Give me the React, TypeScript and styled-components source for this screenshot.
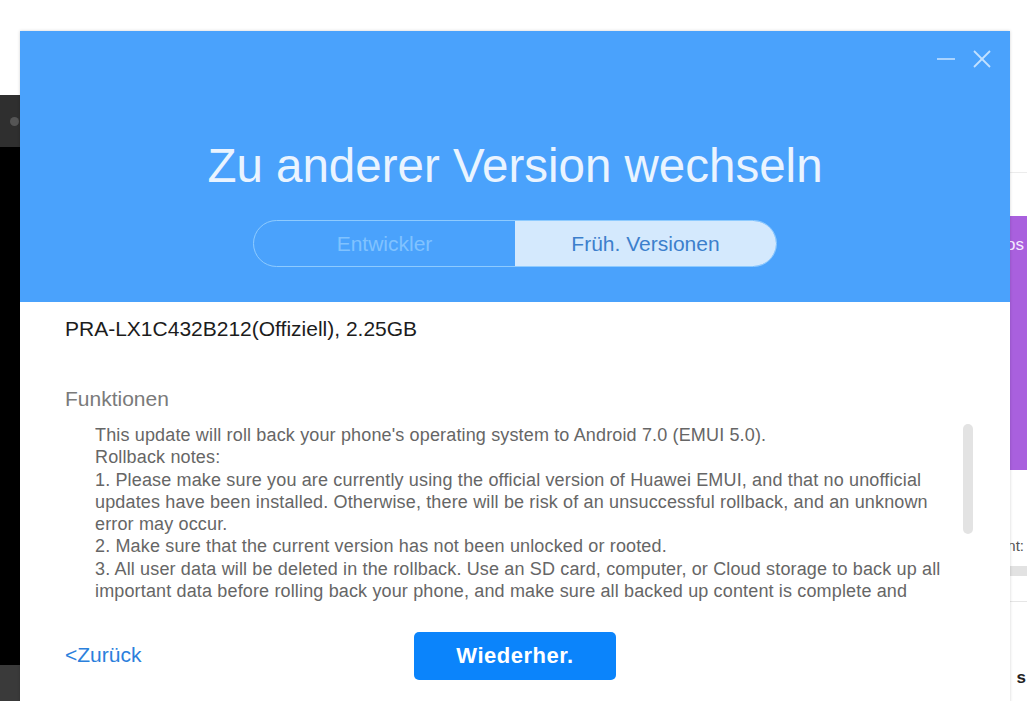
import {FC} from 'react';
import styled, {createGlobalStyle} from 'styled-components';

const GlobalStyle = createGlobalStyle`
  html, body {
    margin: 0;
    padding: 0;
    background: #ffffff;
    overflow: hidden;
  }
  body {
    font-family: 'Liberation Sans', Arial, sans-serif;
  }
  * {
    box-sizing: border-box;
  }
`;

const NOTES = [
  "This update will roll back your phone's operating system to Android 7.0 (EMUI 5.0).",
  'Rollback notes:',
  '1. Please make sure you are currently using the official version of Huawei EMUI, and that no unofficial updates have been installed. Otherwise, there will be risk of an unsuccessful rollback, and an unknown error may occur.',
  '2. Make sure that the current version has not been unlocked or rooted.',
  '3. All user data will be deleted in the rollback. Use an SD card, computer, or Cloud storage to back up all important data before rolling back your phone, and make sure all backed up content is complete and correct.',
  '4. Your phone will restart automatically after the rollback is complete.',
];

interface TabProps {
  label: string;
  active?: boolean;
}

const Tab: FC<TabProps> = ({label, active = false}) => (
  <TabButton active={active}>{label}</TabButton>
);

const App: FC = () => {
  return (
    <>
      <GlobalStyle />
      <Screen>
        <LeftApp>
          <LeftTop>
            <Dot />
          </LeftTop>
          <LeftBody />
          <LeftBottom />
        </LeftApp>
        <Middle />
        <RightApp>
          <RightHeadLine />
          <PurpleCard>
            <CardText>Infos</CardText>
          </PurpleCard>
          <RightLabel>Account:</RightLabel>
          <RightBar />
          <RightDivider />
          <RightBold>s</RightBold>
        </RightApp>
      </Screen>

      <Dialog>
        <Header>
          <WindowControls>
            <svg width='20' height='20' viewBox='0 0 20 20'>
              <line x1='1' y1='10' x2='19' y2='10' stroke='#c3e1ff' strokeWidth='1.6' />
            </svg>
            <svg width='20' height='20' viewBox='0 0 20 20'>
              <line x1='2' y1='2' x2='18' y2='18' stroke='#c3e1ff' strokeWidth='1.8' />
              <line x1='18' y1='2' x2='2' y2='18' stroke='#c3e1ff' strokeWidth='1.8' />
            </svg>
          </WindowControls>
          <Title>Zu anderer Version wechseln</Title>
          <TabBar>
            <Tab label='Entwickler' />
            <Tab label='Früh. Versionen' active />
          </TabBar>
        </Header>

        <Body>
          <VersionName>PRA-LX1C432B212(Offiziell), 2.25GB</VersionName>
          <SectionLabel>Funktionen</SectionLabel>
          <ScrollArea>
            <Notes>
              {NOTES.map((line) => (
                <p key={line}>{line}</p>
              ))}
            </Notes>
            <Track>
              <Thumb />
            </Track>
          </ScrollArea>
          <Footer>
            <BackLink href='#'>&lt;Zurück</BackLink>
            <PrimaryButton>Wiederher.</PrimaryButton>
            <span />
          </Footer>
        </Body>
      </Dialog>
    </>
  );
};

const Screen = styled.div`
  display: flex;
  width: 1027px;
  height: 701px;
`;

const LeftApp = styled.div`
  width: 60px;
  display: flex;
  flex-direction: column;
  padding-top: 95px;
`;

const LeftTop = styled.div`
  height: 52px;
  background: #2f2f2f;
  display: flex;
  align-items: center;
  padding-left: 10px;
`;

const Dot = styled.div`
  width: 9px;
  height: 9px;
  border-radius: 50%;
  background: #555;
`;

const LeftBody = styled.div`
  flex: 1;
  background: #000;
`;

const LeftBottom = styled.div`
  height: 36px;
  background: #3a3a3a;
`;

const Middle = styled.div`
  flex: 1;
`;

const RightApp = styled.div`
  width: 80px;
  display: flex;
  flex-direction: column;
  padding-top: 172px;
  background: #fff;
`;

const RightHeadLine = styled.div`
  height: 1px;
  background: #ececec;
  margin-bottom: 43px;
`;

const PurpleCard = styled.div`
  height: 254px;
  background: #a960de;
  display: flex;
  justify-content: flex-end;
  padding: 19px 3px 0 0;
`;

const CardText = styled.span`
  color: #f4eaff;
  font-size: 17px;
`;

const RightLabel = styled.div`
  margin-top: 67px;
  text-align: right;
  padding-right: 3px;
  color: #555;
  font-size: 15px;
`;

const RightBar = styled.div`
  height: 10px;
  margin-top: 12px;
  background: #e2e2e2;
`;

const RightDivider = styled.div`
  height: 1px;
  margin-top: 25px;
  background: #e6e6e6;
`;

const RightBold = styled.div`
  margin-top: 66px;
  text-align: right;
  padding-right: 1px;
  color: #222;
  font-size: 17px;
  font-weight: bold;
`;

const Dialog = styled.div`
  position: absolute;
  left: 20px;
  top: 31px;
  width: 990px;
  height: 690px;
  background: #fff;
  box-shadow: 0 0 3px rgba(0, 0, 0, 0.18);
  display: flex;
  flex-direction: column;
`;

const Header = styled.header`
  height: 271px;
  background: #4aa2fc;
  display: flex;
  flex-direction: column;
  align-items: center;
  padding: 18px 18px 0;
`;

const WindowControls = styled.div`
  align-self: flex-end;
  display: flex;
  gap: 16px;
`;

const Title = styled.h1`
  margin: 71px 0 0;
  font-size: 47.5px;
  font-weight: normal;
  line-height: 52px;
  color: #eaf4ff;
`;

const TabBar = styled.div`
  margin-top: 28px;
  width: 524px;
  height: 47px;
  display: flex;
  border: 1.5px solid #8ecbff;
  border-radius: 24px;
  overflow: hidden;
`;

const TabButton = styled.div<{active: boolean}>`
  flex: 1;
  display: flex;
  align-items: center;
  justify-content: center;
  font-size: 21px;
  color: ${({active}) => (active ? '#3c7fcc' : '#80c2ff')};
  background: ${({active}) => (active ? '#d4e9fd' : 'transparent')};
`;

const Body = styled.main`
  flex: 1;
  display: flex;
  flex-direction: column;
  padding: 15px 0 0 45px;
`;

const VersionName = styled.div`
  font-size: 21px;
  line-height: 24px;
  color: #1c1c1c;
`;

const SectionLabel = styled.div`
  margin-top: 46px;
  font-size: 21px;
  line-height: 24px;
  color: #7a7a7a;
`;

const ScrollArea = styled.div`
  margin-top: 13px;
  height: 178px;
  display: flex;
  padding-left: 30px;
  padding-right: 37px;
  gap: 16px;
  overflow: hidden;
`;

const Notes = styled.div`
  flex: 1;
  height: 100%;
  overflow-y: auto;
  scrollbar-width: none;
  font-size: 18px;
  letter-spacing: 0.15px;
  line-height: 22.25px;
  color: #666;

  p {
    margin: 0;
  }
`;

const Track = styled.div`
  width: 10px;
  flex-shrink: 0;
`;

const Thumb = styled.div`
  width: 10px;
  height: 110px;
  border-radius: 5px;
  background: #e3e3e3;
`;

const Footer = styled.div`
  margin-top: 30px;
  display: grid;
  grid-template-columns: 1fr auto 1fr;
  align-items: center;
  padding-right: 45px;
`;

const BackLink = styled.a`
  justify-self: start;
  font-size: 21px;
  color: #2b80dc;
  text-decoration: none;
  margin-top: -2px;
`;

const PrimaryButton = styled.button`
  width: 202px;
  height: 48px;
  border: none;
  border-radius: 5px;
  background: #0b84fb;
  color: #fff;
  font-family: inherit;
  font-size: 22px;
  letter-spacing: 0.5px;
  font-weight: bold;
`;

export default App;
